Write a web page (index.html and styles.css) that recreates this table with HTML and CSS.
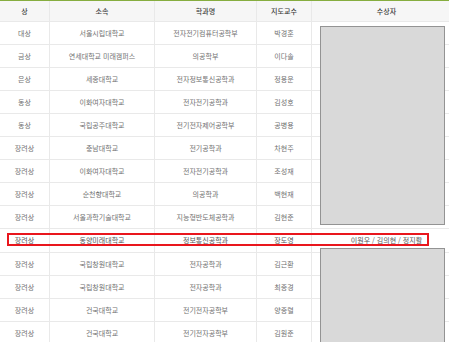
FILE: index.html
```html
<!DOCTYPE html>
<html lang="ko">
<head>
<meta charset="utf-8">
<title>수상자 목록</title>
<link rel="stylesheet" href="styles.css">
</head>
<body>
<div class="board">
  <table class="award-table">
    <colgroup>
      <col class="c-prize">
      <col class="c-school">
      <col class="c-dept">
      <col class="c-prof">
      <col class="c-winner">
    </colgroup>
    <thead>
      <tr><th>상</th><th>소속</th><th>학과명</th><th>지도교수</th><th>수상자</th></tr>
    </thead>
    <tbody>
      <tr><td>대상</td><td>서울시립대학교</td><td>전자전기컴퓨터공학부</td><td>박경훈</td><td></td></tr>
      <tr><td>금상</td><td>연세대학교 미래캠퍼스</td><td>의공학부</td><td>이다솔</td><td></td></tr>
      <tr><td>은상</td><td>세종대학교</td><td>전자정보통신공학과</td><td>정용운</td><td></td></tr>
      <tr><td>동상</td><td>이화여자대학교</td><td>전자전기공학과</td><td>김성호</td><td></td></tr>
      <tr><td>동상</td><td>국립공주대학교</td><td>전기전자제어공학부</td><td>공병용</td><td></td></tr>
      <tr><td>장려상</td><td>충남대학교</td><td>전기공학과</td><td>차현주</td><td></td></tr>
      <tr><td>장려상</td><td>이화여자대학교</td><td>전자전기공학과</td><td>조성재</td><td></td></tr>
      <tr><td>장려상</td><td>순천향대학교</td><td>의공학과</td><td>백현재</td><td></td></tr>
      <tr><td>장려상</td><td>서울과학기술대학교</td><td>지능형반도체공학과</td><td>김현준</td><td></td></tr>
      <tr class="hl"><td>장려상</td><td>동양미래대학교</td><td>정보통신공학과</td><td>장도영</td><td>이원우 / 김의현 / 정지활</td></tr>
      <tr><td>장려상</td><td>국립창원대학교</td><td>전자공학과</td><td>김근환</td><td></td></tr>
      <tr><td>장려상</td><td>국립창원대학교</td><td>전자공학과</td><td>최종경</td><td></td></tr>
      <tr><td>장려상</td><td>건국대학교</td><td>전기전자공학부</td><td>양종렬</td><td></td></tr>
      <tr><td>장려상</td><td>건국대학교</td><td>전기전자공학부</td><td>김원준</td><td></td></tr>
    </tbody>
  </table>
  <div class="redact redact-top"></div>
  <div class="redact redact-bottom"></div>
  <div class="mark"></div>
</div>
</body>
</html>
```
FILE: styles.css
```css
html, body {
  margin: 0;
  padding: 0;
  background: #ffffff;
  overflow: hidden;
}
body {
  width: 449px;
  height: 342px;
  font-family: "Noto Sans CJK KR", "Noto Sans", sans-serif;
}
.board {
  position: relative;
  width: 462px;
}
.award-table {
  border-collapse: separate;
  border-spacing: 0;
  table-layout: fixed;
  width: 462px;
  border-top: 1px solid #86ad3f;
  font-size: 7px;
  color: #727272;
}
.c-prize { width: 50px; }
.c-school { width: 105px; }
.c-dept { width: 102px; }
.c-prof { width: 55px; }
.c-winner { width: 150px; }
.award-table th,
.award-table td {
  padding: 0;
  text-align: center;
  white-space: nowrap;
  overflow: hidden;
  border-right: 1px solid #e9e9e9;
  border-bottom: 1px solid #e9e9e9;
}
.award-table th {
  height: 20px;
  line-height: 20px;
  background: #f6f6f6;
  color: #3d3d3d;
  font-weight: 500;
}
.award-table td {
  height: 22px;
  line-height: 22px;
}
.award-table tr.hl td {
  color: #585858;
  line-height: 21px;
  padding-bottom: 1px;
}
.redact {
  position: absolute;
  left: 320px;
  width: 125px;
  background: #d9d9d9;
  border: 1px solid #939393;
  box-sizing: border-box;
}
.redact-top {
  top: 26px;
  height: 199px;
}
.redact-bottom {
  top: 248px;
  height: 110px;
}
.mark {
  position: absolute;
  left: 7px;
  top: 233px;
  width: 422px;
  height: 13px;
  border: 2px solid #e9161d;
  box-sizing: border-box;
}
```
